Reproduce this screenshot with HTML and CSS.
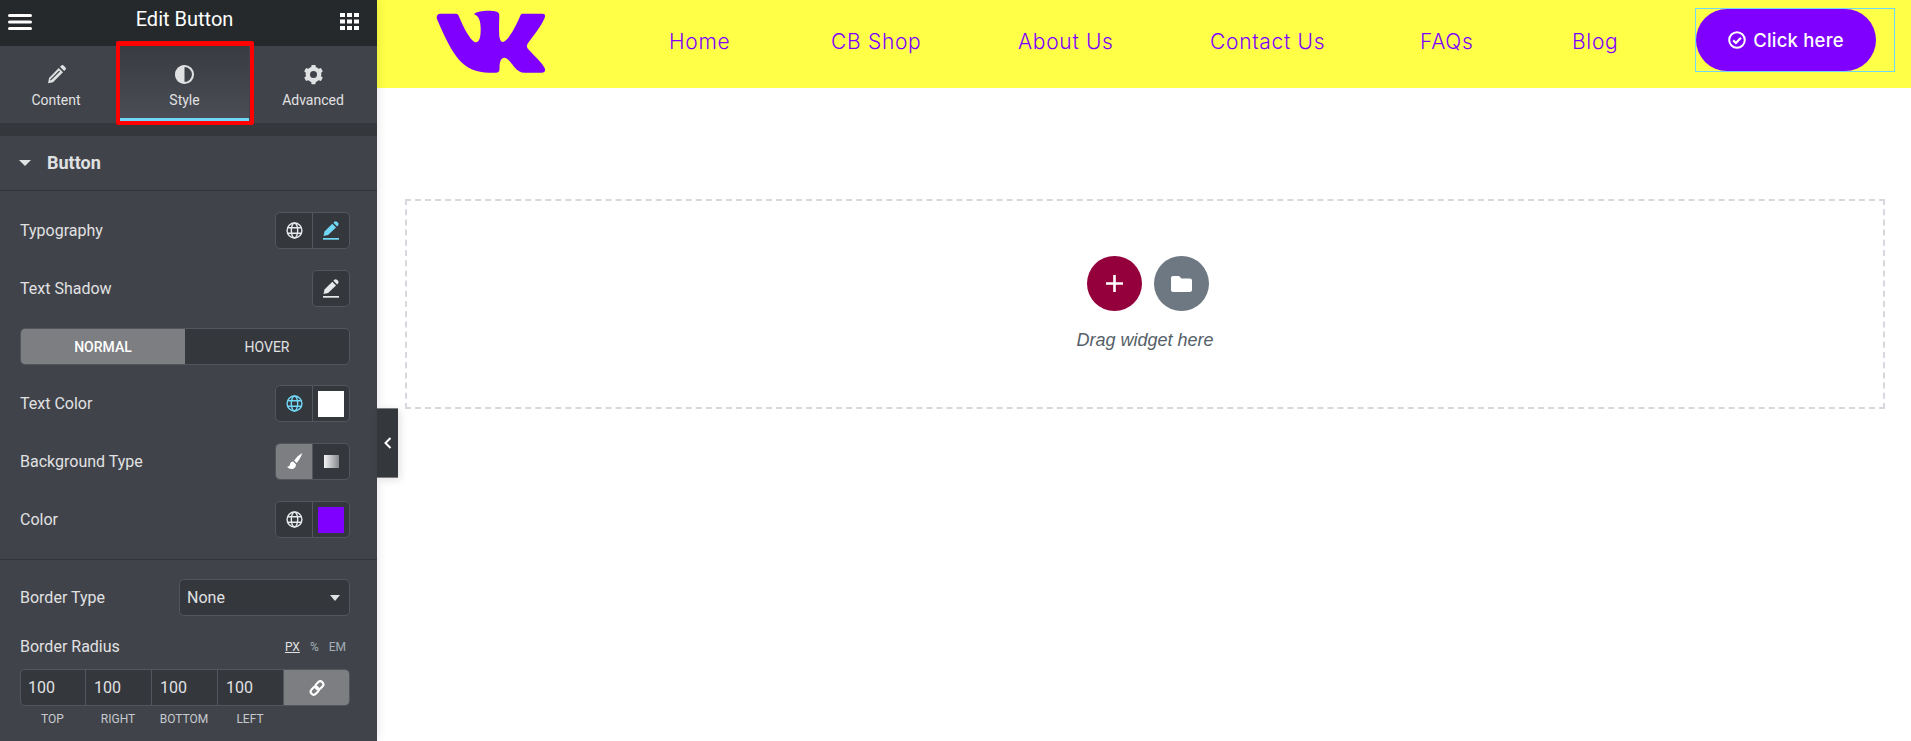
FILE: index.html
```html
<!DOCTYPE html>
<html lang="en">
<head>
    <meta charset="UTF-8">
    <meta name="viewport" content="width=device-width, initial-scale=1.0">
    <title>Edit Button</title>
    <link rel="stylesheet" href="styles.css">
</head>
<body>
    <svg class="icon-defs" width="0" height="0">
        <symbol id="i-pen" viewBox="0 0 24 24">
            <path d="M14.600 4.600l4.800 4.800L8 20.800 2.400 22l1.100-5.900z"/>
            <path d="M16 3.200l1.400-1.400c.8-.8 1.900-.8 2.700 0l2.100 2.100c.8.8.8 1.900 0 2.700l-1.400 1.400z"/>
            <path d="M5 18.500L15.500 8" stroke="#404349" stroke-width="1.300"/>
        </symbol>
        <symbol id="i-pen-line" viewBox="0 0 16 19">
            <path d="M.5 15l1-4.600L9.300 2.800l3.700 3.700L5.100 14z"/>
            <path d="M10.400 1.700l.9-.9c.8-.8 1.900-.8 2.700 0l1 1c.8.8.8 1.900 0 2.700l-.9.9z"/>
            <rect x="0" y="17" width="16" height="1.700"/>
        </symbol>
        <symbol id="i-globe" viewBox="0 0 24 24">
            <g fill="none" stroke="currentColor" stroke-width="2">
                <circle cx="12" cy="12" r="10.500"/>
                <ellipse cx="12" cy="12" rx="4.500" ry="10.500"/>
                <path d="M2.500 8.200h19M2.500 15.800h19"/>
            </g>
        </symbol>
    </svg>

    <div class="app">
        <aside class="panel">
            <div class="panel-head">
                <svg class="menu-icon" viewBox="0 0 24 16"><rect y="0" width="24" height="3" rx="1.500"/><rect y="6.500" width="24" height="3" rx="1.500"/><rect y="13" width="24" height="3" rx="1.500"/></svg>
                <span class="panel-title">Edit Button</span>
                <svg class="grid-icon" viewBox="0 0 19 17">
                    <rect x="0" y="0" width="5" height="4"/><rect x="7" y="0" width="5" height="4"/><rect x="14" y="0" width="5" height="4"/>
                    <rect x="0" y="6.500" width="5" height="4"/><rect x="7" y="6.500" width="5" height="4"/><rect x="14" y="6.500" width="5" height="4"/>
                    <rect x="0" y="13" width="5" height="4"/><rect x="7" y="13" width="5" height="4"/><rect x="14" y="13" width="5" height="4"/>
                </svg>
            </div>

            <div class="tabs">
                <div class="tab tab-content">
                    <svg class="tab-icon" viewBox="0 0 24 24"><use href="#i-pen"/></svg>
                    <span>Content</span>
                </div>
                <div class="tab tab-style">
                    <svg class="tab-icon style-icon" viewBox="0 0 24 24">
                        <path d="M12 1.500a10.500 10.500 0 1 0 0 21z"/>
                        <circle cx="12" cy="12" r="9.700" fill="none" stroke="currentColor" stroke-width="2.400"/>
                    </svg>
                    <span>Style</span>
                </div>
                <div class="tab tab-advanced">
                    <svg class="tab-icon" viewBox="0 0 24 24">
                        <circle cx="12" cy="12" r="6.500" fill="none" stroke="currentColor" stroke-width="5"/>
                        <g>
                            <rect x="9.500" y="1" width="5" height="5" rx="1"/>
                            <rect x="9.500" y="18" width="5" height="5" rx="1"/>
                            <rect x="9.500" y="1" width="5" height="5" rx="1" transform="rotate(60 12 12)"/>
                            <rect x="9.500" y="1" width="5" height="5" rx="1" transform="rotate(120 12 12)"/>
                            <rect x="9.500" y="1" width="5" height="5" rx="1" transform="rotate(240 12 12)"/>
                            <rect x="9.500" y="1" width="5" height="5" rx="1" transform="rotate(300 12 12)"/>
                        </g>
                    </svg>
                    <span>Advanced</span>
                </div>
                <div class="annotation"></div>
            </div>

            <div class="band"></div>

            <div class="section-head">
                <span class="caret"></span>
                <span>Button</span>
            </div>

            <div class="controls">
                <div class="row">
                    <label>Typography</label>
                    <div class="pair">
                        <div class="cell"><svg class="ic"><use href="#i-globe"/></svg></div>
                        <div class="cell active-blue"><svg class="ic ic-pen"><use href="#i-pen-line"/></svg></div>
                    </div>
                </div>
                <div class="row">
                    <label>Text Shadow</label>
                    <div class="pair single">
                        <div class="cell"><svg class="ic ic-pen"><use href="#i-pen-line"/></svg></div>
                    </div>
                </div>
                <div class="switch">
                    <div class="switch-item on">NORMAL</div>
                    <div class="switch-item">HOVER</div>
                </div>
                <div class="row">
                    <label>Text Color</label>
                    <div class="pair">
                        <div class="cell active-blue"><svg class="ic"><use href="#i-globe"/></svg></div>
                        <div class="cell"><span class="swatch swatch-white"></span></div>
                    </div>
                </div>
                <div class="row">
                    <label>Background Type</label>
                    <div class="pair">
                        <div class="cell on">
                            <svg class="ic" viewBox="0 0 24 24"><path d="M23 0c-4 2-9 7-11.500 10.500l3.500 3.500C18 11 21.500 5 23 0z"/><path d="M10 12c-3 0-4 2.500-4.500 4.500C5 18.500 3.500 19 1.500 19.500c2 2.500 5 3.500 8 3 3-.5 5-3.500 4.500-6.500z"/></svg>
                        </div>
                        <div class="cell"><span class="grad"></span></div>
                    </div>
                </div>
                <div class="row">
                    <label>Color</label>
                    <div class="pair">
                        <div class="cell"><svg class="ic"><use href="#i-globe"/></svg></div>
                        <div class="cell"><span class="swatch swatch-purple"></span></div>
                    </div>
                </div>
            </div>

            <div class="controls controls-border">
                <div class="row row-select">
                    <label>Border Type</label>
                    <div class="select">
                        <span>None</span>
                        <span class="select-caret"></span>
                    </div>
                </div>
                <div class="radius-head">
                    <label>Border Radius</label>
                    <div class="units">
                        <span class="unit-on">PX</span>
                        <span>%</span>
                        <span>EM</span>
                    </div>
                </div>
                <div class="dims">
                    <div class="dim">100</div>
                    <div class="dim">100</div>
                    <div class="dim">100</div>
                    <div class="dim">100</div>
                    <div class="dim-link">
                        <svg viewBox="0 0 24 24" fill="none" stroke="#fff" stroke-width="3.200">
                            <rect x="11" y="1.500" width="9" height="13" rx="4.500" transform="rotate(45 15.500 8)"/>
                            <rect x="4" y="9.500" width="9" height="13" rx="4.500" transform="rotate(45 8.500 16)"/>
                        </svg>
                    </div>
                </div>
                <div class="dim-labels">
                    <span>TOP</span>
                    <span>RIGHT</span>
                    <span>BOTTOM</span>
                    <span>LEFT</span>
                    <span></span>
                </div>
            </div>

            <div class="panel-toggle">
                <svg viewBox="0 0 8 12" fill="none" stroke="#fff" stroke-width="2"><path d="M6.500 1L1.500 6l5 5"/></svg>
            </div>
        </aside>

        <main class="canvas">
            <header class="site-header">
                <svg class="logo" viewBox="100 30 310 192" preserveAspectRatio="none">
                    <path d="M112 41H156C162 41 163 45 165 50C176 78 198 126 213 127C222 127 226 112 226 88C226 62 221 48 207 42C215 35 230 32 248 32C264 32 276 34 278 42C279 50 277 76 278 100C278 116 282 126 288 126C300 126 322 88 338 46C339 43 341 41 345 41H400C407 41 409 46 406 54C396 80 372 110 359 130C355 136 355 142 360 148C376 166 398 188 406 204C410 212 406 218 398 218H350C338 218 330 212 320 200C312 190 302 174 294 173C284 172 279 182 279 206C279 214 276 218 268 218H250C176 218 148 170 103 58C100 48 104 41 112 41Z"/>
                </svg>
                <nav class="site-nav">
                    <a>Home</a>
                    <a>CB Shop</a>
                    <a>About Us</a>
                    <a>Contact Us</a>
                    <a>FAQs</a>
                    <a>Blog</a>
                </nav>
                <div class="button-widget">
                    <div class="site-btn">
                        <svg viewBox="0 0 18 18" fill="none" stroke="#fff"><circle cx="9" cy="9" r="7.800" stroke-width="2"/><path d="M5.200 9.400l2.700 2.600 5-5.300" stroke-width="2.200"/></svg>
                        <span>Click here</span>
                    </div>
                </div>
            </header>

            <section class="drop-area">
                <div class="drop-buttons">
                    <div class="drop-btn drop-add">
                        <svg viewBox="0 0 17 17" fill="none" stroke="#fff" stroke-width="2.600"><path d="M8.500 0v17M0 8.500h17"/></svg>
                    </div>
                    <div class="drop-btn drop-folder">
                        <svg viewBox="0 0 21 16" fill="#fff"><path d="M2 0h6l2.500 2.500H19c1.100 0 2 .9 2 2V14c0 1.100-.9 2-2 2H2c-1.100 0-2-.9-2-2V2C0 .9.900 0 2 0z"/></svg>
                    </div>
                </div>
                <p class="drop-text">Drag widget here</p>
            </section>
        </main>
    </div>
</body>
</html>
```

FILE: styles.css
```css
* {
    box-sizing: border-box;
}

html, body {
    margin: 0;
    padding: 0;
    height: 100%;
    overflow: hidden;
}

body {
    background: #fff;
    font-family: Roboto, "Liberation Sans", sans-serif;
}

.icon-defs {
    position: absolute;
}

.app {
    display: flex;
    height: 741px;
}

/* left panel */

.panel {
    position: relative;
    flex: 0 0 377px;
    background: #404349;
    color: #e0e1e3;
    box-shadow: 0 0 10px rgba(0, 0, 0, 0.12);
    fill: currentColor;
}

.panel-head {
    height: 46px;
    background: #26292c;
    display: flex;
    align-items: center;
    justify-content: space-between;
    padding: 0 18px 8px 8px;
}

.menu-icon {
    width: 24px;
    height: 16px;
    margin-top: 5px;
    fill: #fff;
}

.grid-icon {
    width: 19px;
    height: 17px;
    margin-top: 5px;
    fill: #fff;
}

.panel-title {
    color: #fff;
    font-size: 20px;
    margin-left: -3px;
}

.tabs {
    position: relative;
    display: flex;
    height: 77px;
}

.tab {
    display: flex;
    flex-direction: column;
    align-items: center;
    padding-top: 18px;
    font-size: 14px;
    color: #e0e1e3;
}

.tab-content {
    width: 112px;
}

.tab-style {
    width: 129px;
    height: 75px;
    margin-left: 8px;
    background: linear-gradient(#383b40, #4a4d55);
    border-bottom: 3px solid #71d7f7;
}

.tab-advanced {
    width: 128px;
}

.tab-icon {
    width: 21px;
    height: 21px;
    margin-bottom: 7px;
}

.annotation {
    position: absolute;
    left: 116px;
    top: -5px;
    width: 138px;
    height: 84px;
    border: 4px solid #fe0000;
    border-top-width: 5px;
    border-radius: 2px;
}

.band {
    height: 13px;
    background: #34373c;
}

.section-head {
    height: 55px;
    display: flex;
    align-items: center;
    gap: 16px;
    padding: 0 0 2px 19px;
    font-size: 18px;
    font-weight: 700;
    border-bottom: 1px solid #303338;
}

.caret {
    width: 0;
    height: 0;
    margin-top: 1px;
    border-left: 6px solid transparent;
    border-right: 6px solid transparent;
    border-top: 6px solid #e0e1e3;
}

.controls {
    padding: 21px 27px 21px 20px;
    border-bottom: 1px solid #303338;
}

.controls-border {
    padding-top: 19px;
    border-bottom: none;
}

.row {
    display: flex;
    align-items: center;
    justify-content: space-between;
    height: 37px;
    margin-bottom: 21px;
    font-size: 16px;
}

.controls .row:last-child {
    margin-bottom: 0;
}

.pair {
    display: flex;
    width: 75px;
    height: 37px;
    background: #34373c;
    border: 1px solid #53565c;
    border-radius: 5px;
    overflow: hidden;
}

.pair.single {
    width: 38px;
}

.cell {
    flex: 1;
    display: flex;
    align-items: center;
    justify-content: center;
    color: #e6e8ea;
}

.cell + .cell {
    border-left: 1px solid #53565c;
}

.cell.on {
    background: #7d7e82;
    color: #fff;
}

.active-blue {
    color: #71d7f7;
}

.ic {
    width: 17px;
    height: 17px;
    fill: currentColor;
}

.ic-pen {
    width: 16px;
    height: 19px;
}

.swatch {
    width: 26px;
    height: 26px;
}

.swatch-white {
    background: #fff;
}

.swatch-purple {
    background: #7f00ff;
}

.grad {
    width: 15px;
    height: 13px;
    background: linear-gradient(90deg, #f4f4f4, #85888c);
}

.switch {
    display: flex;
    height: 37px;
    margin-bottom: 20px;
    background: #34373c;
    border: 1px solid #53565c;
    border-radius: 5px;
    overflow: hidden;
    font-size: 14px;
}

.switch-item {
    flex: 1;
    display: flex;
    align-items: center;
    justify-content: center;
}

.switch-item.on {
    background: #7d7e82;
    color: #fff;
    font-weight: 500;
}

.select {
    width: 171px;
    height: 37px;
    display: flex;
    align-items: center;
    justify-content: space-between;
    padding: 0 9px 0 7px;
    background: #34373c;
    border: 1px solid #53565c;
    border-radius: 5px;
}

.select-caret {
    width: 0;
    height: 0;
    border-left: 5.500px solid transparent;
    border-right: 5.500px solid transparent;
    border-top: 6px solid #e0e1e3;
}

.row-select {
    margin-bottom: 21px;
}

.radius-head {
    display: flex;
    align-items: center;
    justify-content: space-between;
    height: 19px;
    margin-bottom: 13px;
    font-size: 16px;
}

.units {
    display: flex;
    gap: 10px;
    padding-right: 4px;
    font-size: 12px;
    color: #a4afb7;
}

.unit-on {
    color: #e0e1e3;
    text-decoration: underline;
}

.dims {
    display: grid;
    grid-template-columns: 65px 66px 66px 66px 1fr;
    height: 37px;
    background: #34373c;
    border: 1px solid #53565c;
    border-radius: 5px;
    overflow: hidden;
}

.dim {
    display: flex;
    align-items: center;
    padding-left: 8px;
    font-size: 16px;
    border-right: 1px solid #53565c;
}

.dim:first-child {
    padding-left: 7px;
}

.dim-link {
    display: flex;
    align-items: center;
    justify-content: center;
    background: #7d7e82;
}

.dim-link svg {
    width: 16px;
    height: 16px;
}

.dim-labels {
    display: grid;
    grid-template-columns: 65px 66px 66px 66px 1fr;
    margin-top: 6px;
    font-size: 12px;
    text-align: center;
    color: #c6cacf;
}

.panel-toggle {
    position: absolute;
    left: 377px;
    top: 408px;
    width: 21px;
    height: 70px;
    display: flex;
    align-items: center;
    justify-content: center;
    background: #34373c;
    border-top: 1px solid #7d7e82;
    border-bottom: 1px solid #7d7e82;
    box-shadow: 2px 2px 8px rgba(0, 0, 0, 0.12);
}

.panel-toggle svg {
    width: 8px;
    height: 12px;
}

/* page preview */

.canvas {
    flex: 1;
    min-width: 0;
}

.site-header {
    height: 88px;
    display: flex;
    align-items: center;
    padding: 0 16px 8px 59px;
    background: #ffff47;
    color: #7f00ff;
}

.logo {
    width: 110px;
    height: 64px;
    margin-top: 4px;
    fill: #7f00ff;
}

/* the columns hold each link at its start, the last takes what is left */
.site-nav {
    display: grid;
    grid-template-columns: 162px 187px 192px 210px 152px auto;
    margin: 2px 0 0 123px;
    font-family: Inter, sans-serif;
    font-size: 21px;
    font-weight: 300;
    letter-spacing: 0.7px;
    color: #7f00ff;
}

.button-widget {
    margin-left: auto;
    width: 200px;
    height: 64px;
    border: 1px solid #71d7f7;
}

.site-btn {
    width: 180px;
    height: 62px;
    display: flex;
    align-items: center;
    justify-content: center;
    gap: 7px;
    background: #7f00ff;
    border-radius: 31px;
    color: #fff;
    font-family: Inter, sans-serif;
    font-size: 18.500px;
    font-weight: 500;
    letter-spacing: 0.2px;
}

.site-btn svg {
    width: 18px;
    height: 18px;
}

.drop-area {
    height: 210px;
    margin: 111px 26px 0 28px;
    padding-top: 55px;
    border: 2px dashed #d5d8dc;
    text-align: center;
}

.drop-buttons {
    display: flex;
    justify-content: center;
    gap: 12px;
    padding-left: 6px;
}

.drop-btn {
    width: 55px;
    height: 55px;
    border-radius: 50%;
    display: flex;
    align-items: center;
    justify-content: center;
}

.drop-add {
    background: #93003c;
}

.drop-add svg {
    width: 17px;
    height: 17px;
}

.drop-folder {
    background: #6d7882;
}

.drop-folder svg {
    width: 21px;
    height: 16px;
}

.drop-text {
    margin: 19px 0 0;
    font-family: "Liberation Sans", Arial, sans-serif;
    font-style: italic;
    font-size: 18px;
    color: #556068;
}
```
